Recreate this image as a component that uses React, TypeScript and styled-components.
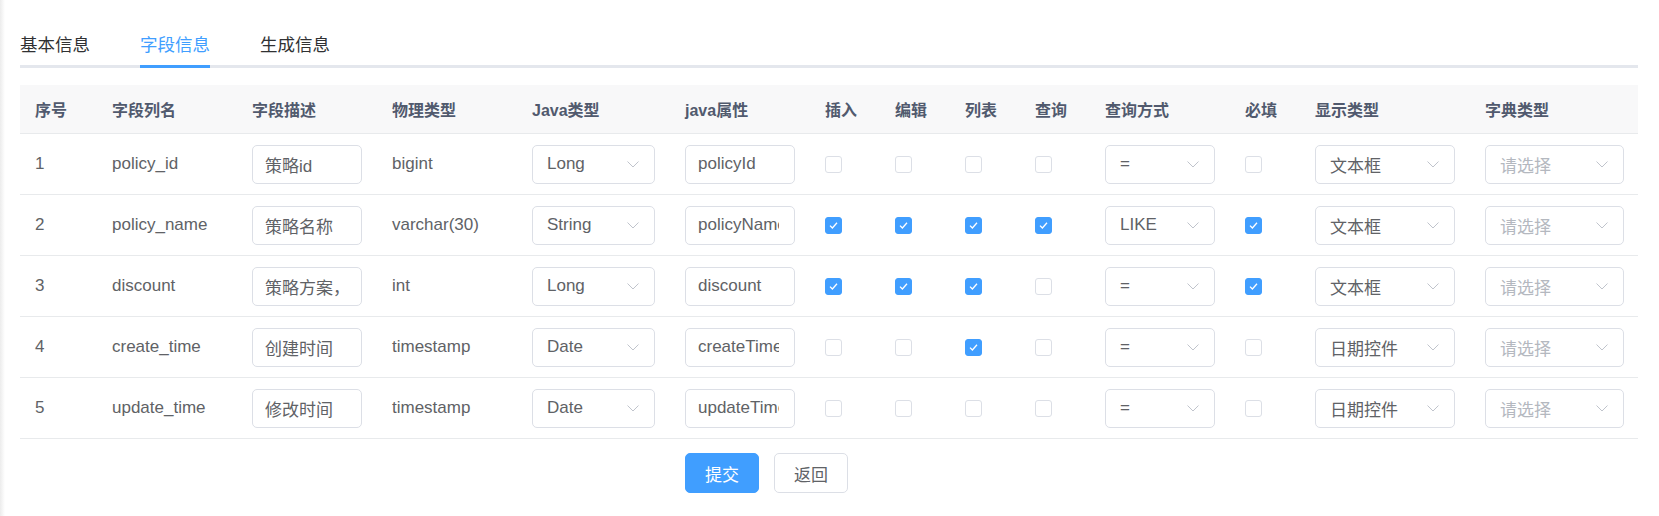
import styled, { createGlobalStyle } from 'styled-components';

const GlobalStyle = createGlobalStyle`
  body {
    margin: 0;
    font-family: "Liberation Sans", "Noto Sans CJK SC", sans-serif;
    background: linear-gradient(to right, #ececec, #ffffff 5px);
  }
`;

const Page = styled.div`
  padding: 18px 21px 20px 20px;
`;

const TabBar = styled.div`
  display: flex;
  border-bottom: 3px solid #e4e7ed;
  margin-bottom: 17px;
`;

const Tab = styled.div<{ $active?: boolean }>`
  position: relative;
  height: 47px;
  line-height: 54px;
  padding: 0 25px;
  font-size: 17.5px;
  color: ${(props) => (props.$active ? '#409eff' : '#303133')};

  &:first-child {
    padding-left: 0;
  }

  &::after {
    content: '';
    display: ${(props) => (props.$active ? 'block' : 'none')};
    position: absolute;
    left: 25px;
    right: 25px;
    bottom: -3px;
    height: 3px;
    background: #409eff;
  }
`;

const COLUMNS = '77px 140px 140px 140px 153px 140px 70px 70px 70px 70px 140px 70px 170px 169px';

const HeadRow = styled.div`
  display: grid;
  grid-template-columns: ${COLUMNS};
  align-items: center;
  height: 49px;
  box-sizing: border-box;
  background: #f8f8f9;
  border-bottom: 1px solid #e8eaec;
`;

const HeadCell = styled.div`
  padding: 0 15px;
  font-size: 16px;
  font-weight: bold;
  color: #515a6e;
  white-space: nowrap;
`;

const Row = styled.div`
  display: grid;
  grid-template-columns: ${COLUMNS};
  align-items: center;
  height: 61px;
  box-sizing: border-box;
  border-bottom: 1px solid #e8eaec;
`;

const Cell = styled.div`
  display: flex;
  align-items: center;
  padding: 0 15px;
  font-size: 17px;
  color: #606266;
  white-space: nowrap;
  min-width: 0;
`;

const TextInput = styled.input`
  width: 100%;
  height: 39px;
  box-sizing: border-box;
  border: 1px solid #dcdfe6;
  border-radius: 5px;
  padding: 0 15px 0 12px;
  font-family: inherit;
  font-size: 17px;
  color: #606266;
  background: #fff;
  outline: none;
`;

const SelectBox = styled.div<{ $placeholder?: boolean }>`
  display: flex;
  align-items: center;
  justify-content: space-between;
  width: 100%;
  height: 39px;
  box-sizing: border-box;
  border: 1px solid #dcdfe6;
  border-radius: 5px;
  padding: 0 15px 0 14px;
  font-size: 17px;
  color: ${(props) => (props.$placeholder ? '#b4b8bf' : '#606266')};
  background: #fff;
`;

const Box = styled.span<{ $checked?: boolean }>`
  display: inline-flex;
  align-items: center;
  justify-content: center;
  width: 17px;
  height: 17px;
  box-sizing: border-box;
  border-radius: 3px;
  border: 1px solid ${(props) => (props.$checked ? '#409eff' : '#dcdfe6')};
  background: ${(props) => (props.$checked ? '#409eff' : '#fff')};
`;

const Footer = styled.div`
  display: flex;
  gap: 15px;
  margin-top: 14px;
  padding-left: 665px;
`;

const Button = styled.button<{ $primary?: boolean }>`
  height: 40px;
  padding: 0 19px;
  border-radius: 5px;
  font-family: inherit;
  font-size: 17px;
  border: 1px solid ${(props) => (props.$primary ? '#409eff' : '#dcdfe6')};
  background: ${(props) => (props.$primary ? '#409eff' : '#fff')};
  color: ${(props) => (props.$primary ? '#fff' : '#606266')};
  cursor: pointer;
`;

function Select({ value }: { value?: string }) {
  return (
    <SelectBox $placeholder={!value}>
      <span>{value || '请选择'}</span>
      <svg width="12" height="7" viewBox="0 0 12 7" fill="none">
        <path d="M0.5 0.5 L6 6 L11.5 0.5" stroke="#c0c4cc" strokeWidth="1" />
      </svg>
    </SelectBox>
  );
}

function Checkbox({ checked }: { checked: boolean }) {
  return (
    <Box $checked={checked}>
      {checked && (
        <svg width="11" height="9" viewBox="0 0 11 9" fill="none">
          <path d="M2 4.6 L4.4 7 L9 1.8" stroke="#fff" strokeWidth="1.3" />
        </svg>
      )}
    </Box>
  );
}

const headers = [
  '序号', '字段列名', '字段描述', '物理类型', 'Java类型', 'java属性', '插入', '编辑',
  '列表', '查询', '查询方式', '必填', '显示类型', '字典类型',
];

type Field = {
  column: string;
  comment: string;
  type: string;
  javaType: string;
  javaField: string;
  flags: boolean[];
  query: string;
  required: boolean;
  html: string;
};

const fields: Field[] = [
  { column: 'policy_id', comment: '策略id', type: 'bigint', javaType: 'Long', javaField: 'policyId', flags: [false, false, false, false], query: '=', required: false, html: '文本框' },
  { column: 'policy_name', comment: '策略名称', type: 'varchar(30)', javaType: 'String', javaField: 'policyName', flags: [true, true, true, true], query: 'LIKE', required: true, html: '文本框' },
  { column: 'discount', comment: '策略方案，折扣率', type: 'int', javaType: 'Long', javaField: 'discount', flags: [true, true, true, false], query: '=', required: true, html: '文本框' },
  { column: 'create_time', comment: '创建时间', type: 'timestamp', javaType: 'Date', javaField: 'createTime', flags: [false, false, true, false], query: '=', required: false, html: '日期控件' },
  { column: 'update_time', comment: '修改时间', type: 'timestamp', javaType: 'Date', javaField: 'updateTime', flags: [false, false, false, false], query: '=', required: false, html: '日期控件' },
];

export default function App() {
  return (
    <>
      <GlobalStyle />
      <Page>
        <TabBar>
          <Tab>基本信息</Tab>
          <Tab $active>字段信息</Tab>
          <Tab>生成信息</Tab>
        </TabBar>

        <HeadRow>
          {headers.map((h) => (
            <HeadCell key={h}>{h}</HeadCell>
          ))}
        </HeadRow>
        {fields.map((f, i) => (
          <Row key={f.column}>
            <Cell>{i + 1}</Cell>
            <Cell>{f.column}</Cell>
            <Cell><TextInput readOnly value={f.comment} /></Cell>
            <Cell>{f.type}</Cell>
            <Cell><Select value={f.javaType} /></Cell>
            <Cell><TextInput readOnly value={f.javaField} /></Cell>
            {f.flags.map((flag, k) => (
              <Cell key={k}><Checkbox checked={flag} /></Cell>
            ))}
            <Cell><Select value={f.query} /></Cell>
            <Cell><Checkbox checked={f.required} /></Cell>
            <Cell><Select value={f.html} /></Cell>
            <Cell><Select /></Cell>
          </Row>
        ))}

        <Footer>
          <Button type="button" $primary>提交</Button>
          <Button type="button">返回</Button>
        </Footer>
      </Page>
    </>
  );
}
